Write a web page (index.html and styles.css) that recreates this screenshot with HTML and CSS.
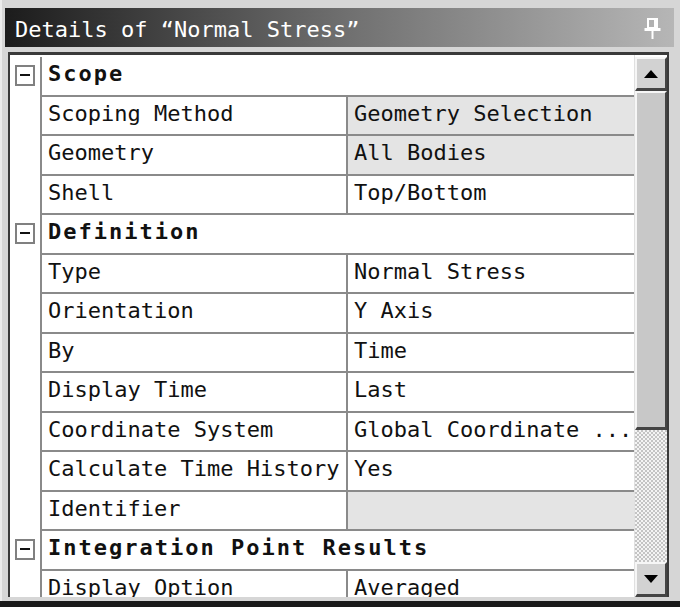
FILE: index.html
```html
<!DOCTYPE html>
<html>
<head>
<meta charset="utf-8">
<link rel="stylesheet" href="styles.css">
</head>
<body>
<div class="window">
  <div class="titlebar">
    <span class="title">Details of “Normal Stress”</span>
    <svg class="pin" width="18" height="22" viewBox="0 0 18 22">
      <rect x="4" y="1" width="9" height="9" fill="none" stroke="#fff" stroke-width="2"/>
      <rect x="10" y="0" width="4" height="11" fill="#fff"/>
      <rect x="0.5" y="10" width="16" height="3" fill="#fff"/>
      <rect x="7.5" y="13" width="2" height="8" fill="#fff"/>
    </svg>
  </div>
  <div class="frame">
    <div class="table">
      <div class="row">
        <div class="gut"><span class="exp"></span></div>
        <div class="head">Scope</div>
      </div>
      <div class="row">
        <div class="gut"></div>
        <div class="name">Scoping Method</div>
        <div class="val shaded">Geometry Selection</div>
      </div>
      <div class="row">
        <div class="gut"></div>
        <div class="name">Geometry</div>
        <div class="val shaded">All Bodies</div>
      </div>
      <div class="row">
        <div class="gut"></div>
        <div class="name">Shell</div>
        <div class="val">Top/Bottom</div>
      </div>
      <div class="row">
        <div class="gut"><span class="exp"></span></div>
        <div class="head">Definition</div>
      </div>
      <div class="row">
        <div class="gut"></div>
        <div class="name">Type</div>
        <div class="val">Normal Stress</div>
      </div>
      <div class="row">
        <div class="gut"></div>
        <div class="name">Orientation</div>
        <div class="val">Y Axis</div>
      </div>
      <div class="row">
        <div class="gut"></div>
        <div class="name">By</div>
        <div class="val">Time</div>
      </div>
      <div class="row">
        <div class="gut"></div>
        <div class="name">Display Time</div>
        <div class="val">Last</div>
      </div>
      <div class="row">
        <div class="gut"></div>
        <div class="name">Coordinate System</div>
        <div class="val">Global Coordinate ...</div>
      </div>
      <div class="row">
        <div class="gut"></div>
        <div class="name">Calculate Time History</div>
        <div class="val">Yes</div>
      </div>
      <div class="row">
        <div class="gut"></div>
        <div class="name">Identifier</div>
        <div class="val shaded"></div>
      </div>
      <div class="row">
        <div class="gut"><span class="exp"></span></div>
        <div class="head">Integration Point Results</div>
      </div>
      <div class="row">
        <div class="gut"></div>
        <div class="name">Display Option</div>
        <div class="val">Averaged</div>
      </div>
    </div>
    <div class="scrollbar">
      <div class="btn up">
        <svg width="14" height="8" viewBox="0 0 14 8"><polygon points="7,0 14,8 0,8" fill="#000"/></svg>
      </div>
      <div class="thumb"></div>
      <div class="track"></div>
      <div class="btn down">
        <svg width="14" height="8" viewBox="0 0 14 8"><polygon points="0,0 14,0 7,8" fill="#000"/></svg>
      </div>
    </div>
  </div>
  <div class="base"></div>
</div>
</body>
</html>
```

FILE: styles.css
```css
html, body {
  margin: 0;
  padding: 0;
}

body {
  width: 680px;
  height: 607px;
  overflow: hidden;
  background: #d6d6d6;
  font-family: "DejaVu Sans Mono", monospace;
  font-size: 22px;
  color: #111;
}

.window {
  box-sizing: border-box;
  height: 607px;
  padding: 8px 6px 0 5px;
  display: flex;
  flex-direction: column;
  border-left: 2px solid #ececec;
}

.titlebar {
  height: 39px;
  flex: none;
  display: flex;
  align-items: flex-start;
  justify-content: space-between;
  background: linear-gradient(to right, #1c1c1c 0%, #6e6e6e 50%, #b6b6b6 100%);
  margin-left: -2px;
}

.title {
  color: #fff;
  padding: 8px 0 0 10px;
  line-height: 27px;
  white-space: nowrap;
}

.pin {
  margin: 10px 12px 0 0;
}

.frame {
  flex: none;
  height: 545px;
  margin: 5px 5px 0 1px;
  box-sizing: border-box;
  border-top: 3px solid #3a3a3a;
  border-left: 2px solid #3a3a3a;
  border-right: 2px solid #3a3a3a;
  display: flex;
  overflow: hidden;
  background: #fff;
}

.table {
  width: 624px;
  flex: none;
  padding-top: 2px;
  background: #fff;
}

.row {
  display: flex;
  height: 39.5px;
}

.gut {
  width: 30px;
  flex: none;
  border-right: 2px solid #8a8a8a;
  display: flex;
  align-items: center;
  justify-content: center;
  background: #fff;
}

.exp {
  box-sizing: border-box;
  width: 20px;
  height: 21px;
  border: 2px solid #808080;
  background: #fff;
  position: relative;
  display: block;
  margin-bottom: 3px;
}

.exp::after {
  content: "";
  position: absolute;
  left: 3px;
  right: 3px;
  top: 7px;
  height: 2px;
  background: #111;
}

.name,
.val,
.head {
  box-sizing: border-box;
  border-bottom: 2px solid #8a8a8a;
  line-height: 34px;
  padding-left: 6px;
  white-space: nowrap;
  overflow: hidden;
}

.name {
  width: 306px;
  flex: none;
  border-right: 2px solid #8a8a8a;
}

.val {
  flex: 1;
}

.val.shaded {
  background: #e4e4e4;
}

.head {
  flex: 1;
  font-weight: bold;
  letter-spacing: 2px;
}

.scrollbar {
  flex: 1;
  display: flex;
  flex-direction: column;
  padding-top: 2px;
  background: #fff;
  border-left: 1px solid #e0e0e0;
}

.btn {
  box-sizing: border-box;
  flex: none;
  background: #d2d2d2;
  border-top: 2px solid #f6f6f6;
  border-left: 2px solid #f6f6f6;
  border-right: 2px solid #444;
  border-bottom: 3px solid #444;
  display: flex;
  align-items: center;
  justify-content: center;
}

.btn.up {
  height: 34px;
}

.btn.down {
  height: 35px;
}

.thumb {
  box-sizing: border-box;
  flex: none;
  height: 339px;
  background: #c8c8c8;
  border-top: 2px solid #f6f6f6;
  border-left: 2px solid #f6f6f6;
  border-right: 2px solid #444;
  border-bottom: 3px solid #444;
}

.track {
  flex: 1;
  background: repeating-conic-gradient(#c4c4c4 0 25%, #f4f4f4 0 50%) 0 0 / 4px 4px;
}

.base {
  flex: 1;
  margin: 4px -6px 0 -7px;
  background: #1a1a1a;
}
```
